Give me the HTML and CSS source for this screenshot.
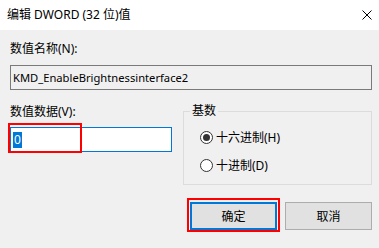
FILE: index.html
```html
<!DOCTYPE html>
<html lang="zh-CN">
<head>
<meta charset="utf-8">
<title>编辑 DWORD (32 位)值</title>
<link rel="stylesheet" href="styles.css">
</head>
<body>
<div class="dialog">
  <div class="titlebar">
    <span class="title">编辑 DWORD (32 位)值</span>
    <svg class="close" width="10" height="10" viewBox="0 0 10 10"><path d="M0.5 0.5 L9.5 9.5 M9.5 0.5 L0.5 9.5" stroke="#000" stroke-width="1" fill="none"/></svg>
  </div>
  <div class="content">
    <div class="label name-label">数值名称(N):</div>
    <div class="field readonly"><span class="latin">KMD_EnableBrightnessinterface2</span></div>
    <div class="row">
      <div class="col">
        <div class="label">数值数据(V):</div>
        <div class="field-wrap">
          <div class="field editable"><span class="sel">0</span></div>
          <span class="mark mark-input"></span>
        </div>
      </div>
      <div class="group">
        <div class="group-title">基数</div>
        <div class="radio checked"><span class="circle"></span><span>十六进制(H)</span></div>
        <div class="radio second"><span class="circle"></span><span>十进制(D)</span></div>
      </div>
    </div>
    <div class="buttons">
      <div class="btn-wrap">
        <button class="btn primary">确定</button>
        <span class="mark mark-btn"></span>
      </div>
      <button class="btn">取消</button>
    </div>
  </div>
</div>
</body>
</html>
```

FILE: styles.css
```css
* { box-sizing: border-box; }
html, body { margin: 0; padding: 0; }
body {
  width: 379px;
  height: 248px;
  overflow: hidden;
  background: #f0f0f0;
  font-family: "Noto Sans", "Noto Sans CJK SC", sans-serif;
  font-size: 12px;
  color: #000;
}
.dialog { width: 379px; height: 248px; }
.titlebar {
  height: 30px;
  background: #fff;
  display: flex;
  align-items: center;
  justify-content: space-between;
  padding: 0 7px 1px 7px;
}
.title { line-height: 16px; }
.close { display: block; }
.content { padding: 0 7px 0 10px; }
.label { line-height: 16px; }
.name-label { margin-top: 11px; }
.field {
  height: 25px;
  line-height: 23px;
  padding-left: 2px;
  white-space: nowrap;
}
.latin { font-size: 11.2px; }
.readonly {
  margin-top: 8px;
  border: 1px solid #7a7a7a;
  background: #f0f0f0;
}
.row {
  display: flex;
  gap: 11px;
  margin-top: 14px;
}
.col { width: 162px; }
.field-wrap { position: relative; margin-top: 7px; }
.editable {
  border: 1px solid #0078d7;
  background: #fff;
  display: flex;
  align-items: center;
}
.sel {
  display: inline-block;
  background: #0078d7;
  color: #fff;
  line-height: 16px;
  padding: 0 1px;
}
.mark {
  position: absolute;
  border: 2px solid #ff0000;
  pointer-events: none;
}
.mark-input { left: -2px; top: -4px; width: 74px; height: 30px; }
.group {
  flex: 1;
  margin-top: 7px;
  height: 74px;
  border: 1px solid #dcdcdc;
}
.group-title {
  width: fit-content;
  margin: -9px 0 0 6px;
  padding: 0 2px;
  background: #f0f0f0;
  line-height: 16px;
}
.radio {
  display: flex;
  align-items: center;
  height: 17px;
  margin: 10px 0 0 16px;
  line-height: 17px;
}
.radio.second { margin-top: 11px; }
.circle {
  width: 13px;
  height: 13px;
  border: 1px solid #333;
  border-radius: 50%;
  background: #fff;
  margin-right: 3px;
  display: flex;
  align-items: center;
  justify-content: center;
}
.checked .circle::after {
  content: "";
  width: 7px;
  height: 7px;
  border-radius: 50%;
  background: #333;
}
.buttons {
  display: flex;
  justify-content: flex-end;
  gap: 8px;
  margin-top: 17px;
}
.btn-wrap { position: relative; }
.btn {
  display: block;
  width: 87px;
  height: 28px;
  margin: 0;
  padding: 0;
  font: inherit;
  color: #000;
  background: #e1e1e1;
  border: 1px solid #adadad;
}
.btn.primary { border: 2px solid #0078d7; }
.mark-btn { left: -3px; top: -4px; width: 93px; height: 34px; }
```
